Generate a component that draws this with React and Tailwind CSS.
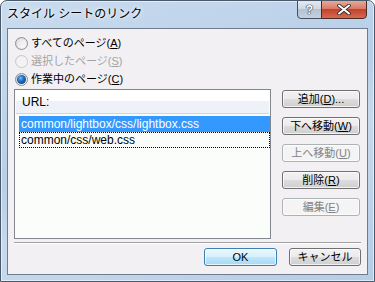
import React from 'react'

const FONT = { fontFamily: '"Liberation Sans", "Noto Sans CJK JP", sans-serif' }

function Radio({ checked, disabled, label, accel }) {
  const ring = disabled
    ? 'border-[#c9c9c9] bg-[linear-gradient(135deg,#e8e8e8,#fafafa)]'
    : 'border-[#8e8f8f] bg-[linear-gradient(135deg,#d0d0d0,#f6f6f6)]'
  return (
    <div className="flex h-[18px] items-center">
      <span className={`ml-px flex h-[13px] w-[13px] items-center justify-center rounded-full border ${ring}`}>
        <span className={`h-[9px] w-[9px] rounded-full ${checked ? 'bg-[radial-gradient(circle_at_40%_35%,#6fc0ff_0%,#1d6cc4_40%,#0b2f6e_100%)]' : disabled ? 'bg-[#f3f3f3]' : 'bg-[linear-gradient(135deg,#e2e2e2,#fdfdfd)]'}`} />
      </span>
      <span className={`ml-[3px] text-[11px] leading-none ${disabled ? 'text-[#a3a3a3]' : 'text-black'}`}>
        {label}(<span className="underline">{accel}</span>)
      </span>
    </div>
  )
}

function Button({ children, disabled, primary, className = '' }) {
  let look = 'border-[#707070] bg-[linear-gradient(#f2f2f2_0%,#ebebeb_50%,#dddddd_50%,#cfcfcf_100%)] text-black'
  if (primary) look = 'border-[#3c7fb1] bg-[linear-gradient(#eaf6fd_0%,#d9f0fc_50%,#bee6fd_50%,#a7d9f5_100%)] text-black'
  if (disabled) look = 'border-[#adb2b5] bg-[#f4f4f4] text-[#838383]'
  return (
    <div className={`flex h-[18px] items-center justify-center rounded-[3px] border text-[11px] leading-none shadow-[inset_0_0_0_1px_rgba(255,255,255,0.7)] ${look} ${className}`}>
      {children}
    </div>
  )
}

export default function App() {
  return (
    <div style={FONT} className="flex h-[282px] w-[375px] flex-col overflow-hidden rounded-t-[7px] border border-[#4b5a6b] bg-[linear-gradient(160deg,#c9dbee_0%,#b8cfe8_45%,#c7d9ed_60%,#b6cde6_100%)] shadow-[inset_0_0_0_1px_rgba(255,255,255,0.55)]">
      {/* Title bar */}
      <div className="flex h-[27px] shrink-0 items-start justify-between">
        <span className="mt-[5px] pl-[6px] text-[12px] leading-[16px] text-black [text-shadow:0_0_6px_#fff,0_0_3px_#fff]">
          スタイル シートのリンク
        </span>
        <div className="-mt-px mr-[7px] flex">
          <div className="flex h-[19px] w-[25px] items-center justify-center rounded-bl-[4px] border border-[#42505f] bg-[linear-gradient(#e3e9f0_0%,#cdd7e3_50%,#b4c3d4_50%,#c4d0de_100%)] text-[12px] font-bold leading-none text-white [text-shadow:0_0_1px_#333,0_0_1px_#333,0_0_1px_#333]">
            ?
          </div>
          <div className="-ml-px flex h-[19px] w-[46px] items-center justify-center rounded-br-[4px] border border-[#4a2a24] bg-[linear-gradient(#e9a899_0%,#d77561_50%,#c3432c_50%,#d46a4f_100%)]">
            <svg width="14" height="11" viewBox="0 0 14 11">
              <path d="M2 1.5 L12 9.5 M12 1.5 L2 9.5" stroke="#3a2a2a" strokeWidth="3.6" strokeLinecap="round" />
              <path d="M2 1.5 L12 9.5 M12 1.5 L2 9.5" stroke="#fff" strokeWidth="2" strokeLinecap="round" />
            </svg>
          </div>
        </div>
      </div>

      {/* Client area */}
      <div className="mx-[6px] mb-[6px] flex flex-1 flex-col border border-[#6f7c8c] bg-[#f2f0f3] px-[6px] pt-[5px]">
        <Radio label="すべてのページ" accel="A" />
        <Radio label="選択したページ" accel="S" disabled />
        <Radio label="作業中のページ" accel="C" checked />

        <div className="mt-px flex">
          <div className="flex h-[150px] w-[257px] flex-col border border-[#828790] bg-[#fbfdfb]">
            <div className="mx-px mt-px flex h-[23px] items-center border-b border-[#d5d5d5] bg-[linear-gradient(#ffffff_0%,#ffffff_45%,#eef1f7_45%,#eef1f7_100%)] pl-[6px] text-[12px] text-black">
              URL:
            </div>
            <div className="mt-[2px] pl-[4px]">
              <div className="flex h-[16px] items-center bg-[#3399ff] pl-[2px] text-[12px] text-white">
                common/lightbox/css/lightbox.css
              </div>
              <div className="flex h-[16px] items-center border border-dotted border-black pl-px text-[12px] text-black">
                common/css/web.css
              </div>
            </div>
          </div>

          <div className="ml-[11px] mt-px flex w-[78px] flex-col gap-[9px]">
            <Button>追加(<span className="underline">D</span>)...</Button>
            <Button>下へ移動(<span className="underline">W</span>)</Button>
            <Button disabled>上へ移動(<span className="underline">U</span>)</Button>
            <Button>削除(<span className="underline">R</span>)</Button>
            <Button disabled>編集(<span className="underline">E</span>)</Button>
          </div>
        </div>

        <div className="mt-[3px] h-[2px] border-t border-b border-t-[#a0a0a0] border-b-white" />

        <div className="mt-[4px] flex justify-end gap-[12px]">
          <Button primary className="w-[73px]">OK</Button>
          <Button className="w-[72px]">キャンセル</Button>
        </div>
      </div>
    </div>
  )
}
